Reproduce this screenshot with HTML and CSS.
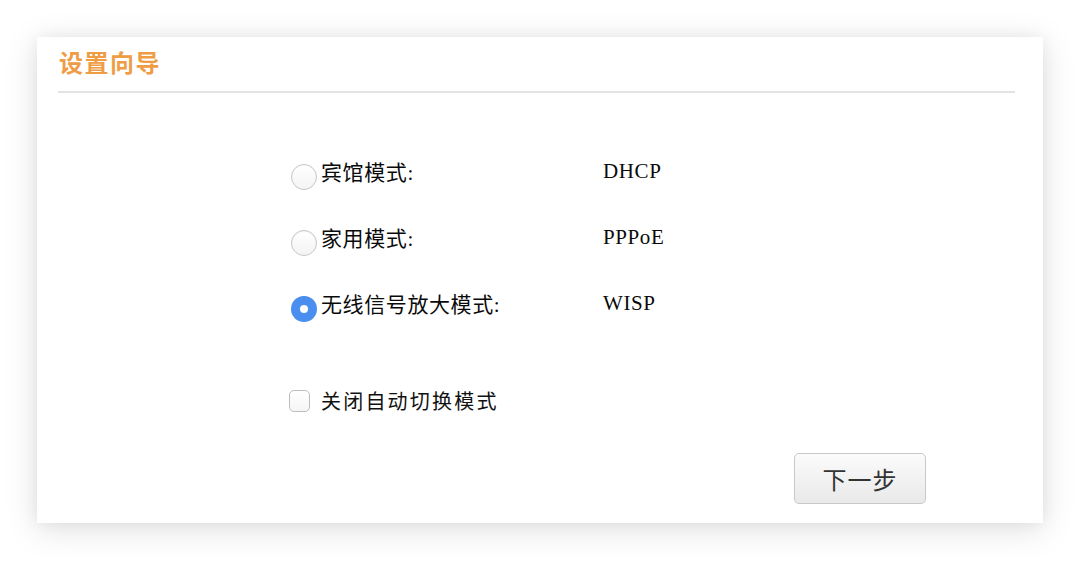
FILE: index.html
```html
<!DOCTYPE html>
<html lang="zh-CN">
<head>
<meta charset="utf-8">
<title>设置向导</title>
<link rel="stylesheet" href="styles.css">
</head>
<body>
<div class="card">
  <div class="header">
    <h1 class="title">设置向导</h1>
  </div>
  <div class="options">
    <label class="row">
      <input class="radio" type="radio" name="mode">
      <span class="label">宾馆模式:</span>
      <span class="value">DHCP</span>
    </label>
    <label class="row">
      <input class="radio" type="radio" name="mode">
      <span class="label">家用模式:</span>
      <span class="value">PPPoE</span>
    </label>
    <label class="row">
      <input class="radio" type="radio" name="mode" checked>
      <span class="label">无线信号放大模式:</span>
      <span class="value">WISP</span>
    </label>
    <label class="check-row">
      <input class="check" type="checkbox">
      <span class="check-label">关闭自动切换模式</span>
    </label>
  </div>
  <div class="actions">
    <button class="btn" type="button">下一步</button>
  </div>
</div>
</body>
</html>
```
FILE: styles.css
```css
html, body {
  margin: 0;
  padding: 0;
  background: #ffffff;
}

body {
  width: 1080px;
  height: 561px;
  overflow: hidden;
  padding: 37px 0 0 37px;
  box-sizing: border-box;
  font-family: "Liberation Serif", "Noto Sans CJK SC", serif;
  color: #0a0a0a;
}

.card {
  width: 1006px;
  height: 486px;
  box-sizing: border-box;
  background: #fff;
  box-shadow: 0 6px 32px rgba(0, 0, 0, 0.13), 0 0 14px rgba(0, 0, 0, 0.05);
  padding: 13px 28px 0 21px;
  display: flex;
  flex-direction: column;
}

.header {
  padding-bottom: 17px;
  border-bottom: 2px solid #e3e3e3;
}

.title {
  margin: 0 0 0 1px;
  font-family: "Noto Sans CJK SC", sans-serif;
  font-size: 24px;
  line-height: 24px;
  font-weight: 700;
  letter-spacing: 1.5px;
  color: #ee9d45;
}

.options {
  margin: 45px 0 0 232px;
  display: flex;
  flex-direction: column;
}

.row {
  height: 66px;
  display: flex;
  align-items: center;
  font-size: 21px;
  letter-spacing: 0.6px;
}

.radio {
  appearance: none;
  -webkit-appearance: none;
  margin: 12px 4px 0 1px;
  width: 26px;
  height: 26px;
  border-radius: 50%;
  box-sizing: border-box;
  border: 1px solid #c6c6c6;
  background: linear-gradient(#ffffff, #f4f4f4);
  box-shadow: inset 0 1px 1px rgba(0, 0, 0, 0.04);
  flex: none;
  display: flex;
  align-items: center;
  justify-content: center;
}

.radio:checked {
  border: none;
  background: #4a8ef0;
}

.radio:checked::after {
  content: "";
  width: 8px;
  height: 8px;
  border-radius: 50%;
  background: #fff;
}

.label {
  width: 282px;
  flex: none;
}

.value {
  flex: none;
}

.check-row {
  margin-top: 31px;
  height: 66px;
  display: flex;
  align-items: center;
  font-family: "Noto Sans CJK SC", sans-serif;
  font-size: 20px;
  letter-spacing: 2.2px;
  color: #111;
}

.check {
  appearance: none;
  -webkit-appearance: none;
  margin: 2px 11px 0 -1px;
  width: 21px;
  height: 22px;
  box-sizing: border-box;
  border: 1px solid #bdbdbd;
  border-radius: 5px;
  background: linear-gradient(#ffffff, #f5f5f5);
  flex: none;
}

.actions {
  margin: 20px 0 0 736px;
  display: flex;
}

.btn {
  width: 132px;
  height: 51px;
  box-sizing: border-box;
  border: 1px solid #c8c8c8;
  border-radius: 5px;
  background: linear-gradient(#fbfbfb, #e9e9e9);
  font-family: "Noto Sans CJK SC", sans-serif;
  font-size: 24px;
  letter-spacing: 1px;
  color: #333;
  padding: 0;
  cursor: pointer;
}
```
